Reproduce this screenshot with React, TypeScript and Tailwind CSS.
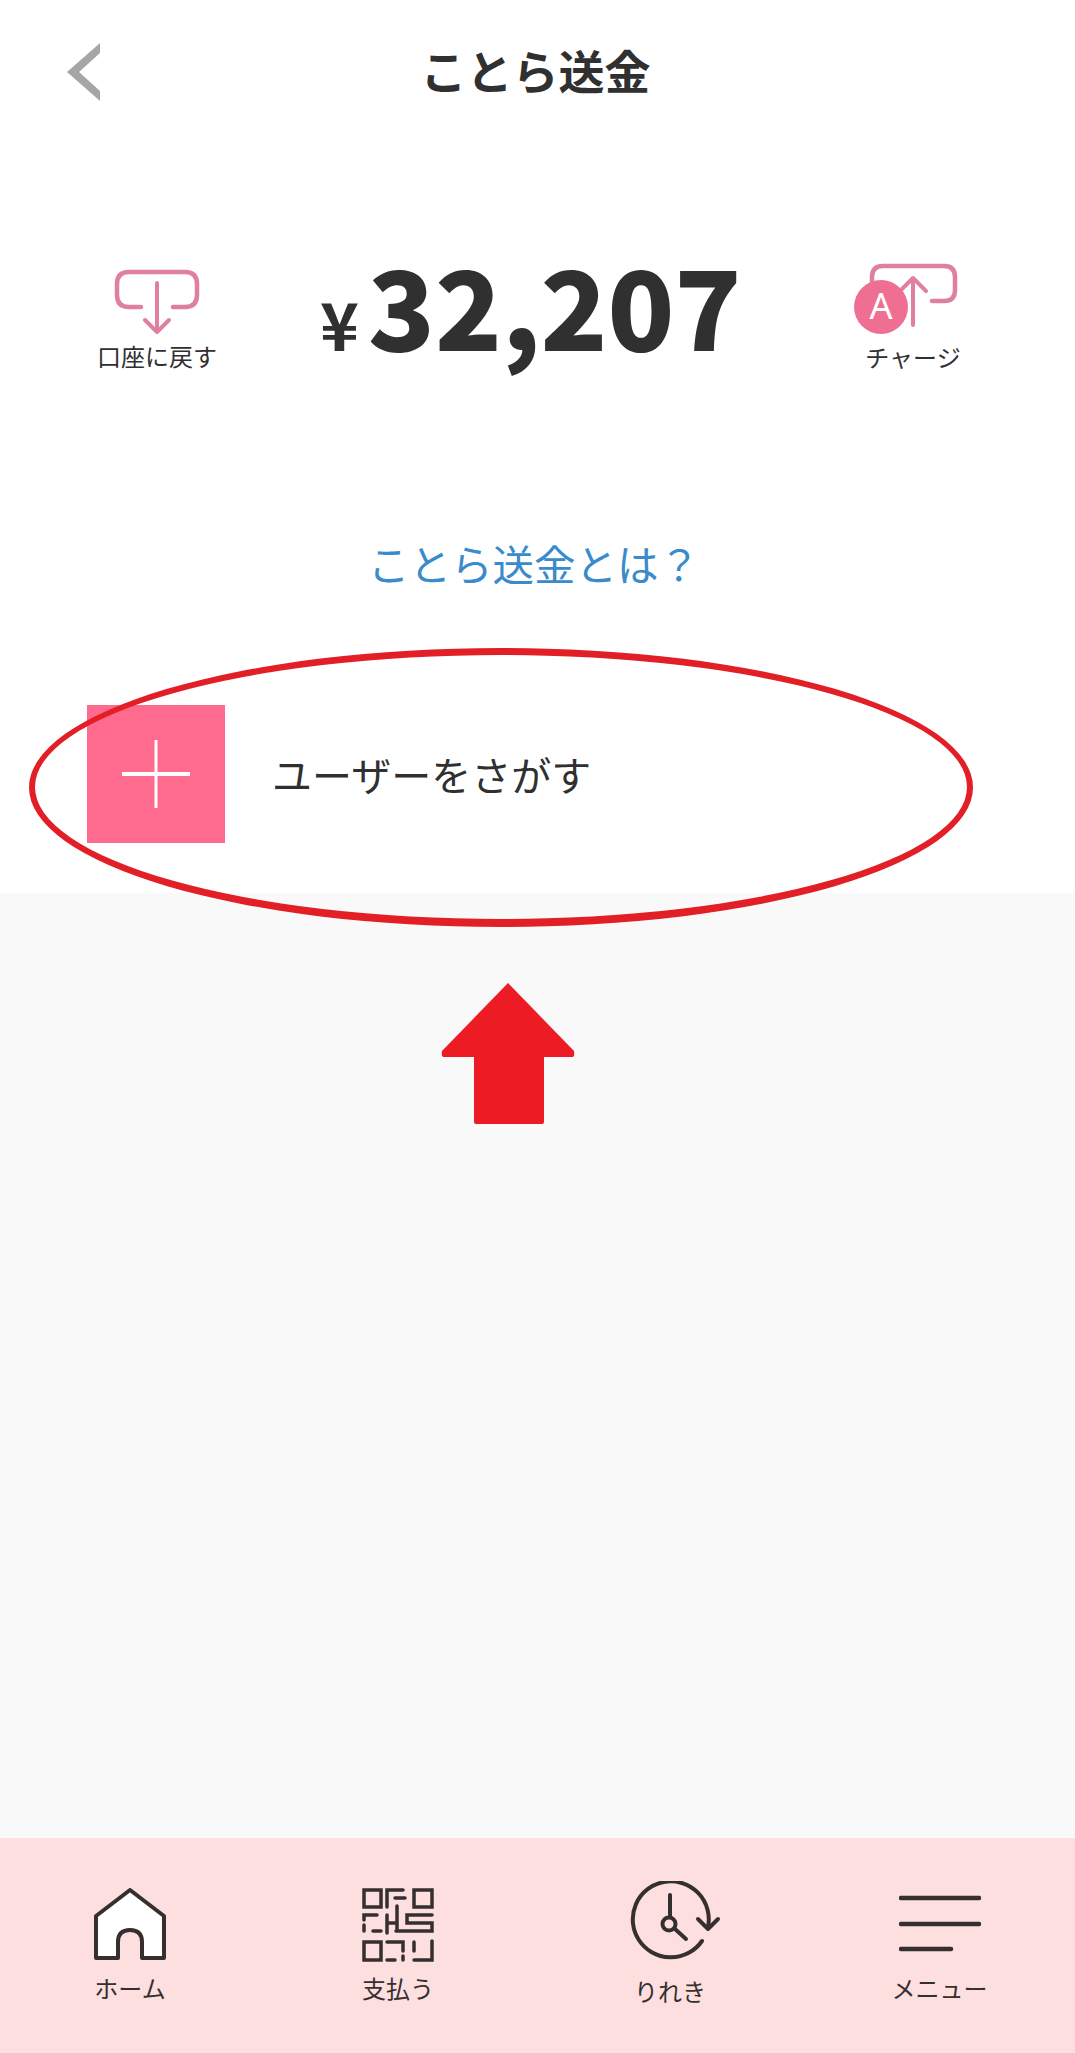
const jp = 'font-["Noto_Sans_CJK_JP",sans-serif]';

function BackIcon() {
  return (
    <svg width="33" height="58" viewBox="0 0 33 58">
      <path d="M33 0 V10 L12 29 L33 48 V58 L0 29 Z" fill="#a6a6a6" />
    </svg>
  );
}

function WithdrawIcon() {
  return (
    <svg width="86" height="66" viewBox="0 0 86 66" fill="none" stroke="#e0809f" strokeLinecap="round" strokeLinejoin="round">
      <path d="M27 38 H15 Q3 38 3 26 V15 Q3 3 15 3 H71 Q83 3 83 15 V26 Q83 38 71 38 H59" strokeWidth="4.5" />
      <path d="M43 14 V63 M31 51 L43 63 L55 51" strokeWidth="4" />
    </svg>
  );
}

function ChargeIcon() {
  return (
    <svg width="106" height="74" viewBox="0 0 106 74" fill="none" stroke="#e0809f" strokeLinecap="round" strokeLinejoin="round">
      <path d="M19 22 V15 Q19 4 30 4 H91 Q102 4 102 15 V28 Q102 39 91 39 H79" strokeWidth="4.5" />
      <path d="M60 63 V16 M47 29 L60 16 L73 29" strokeWidth="4" />
      <circle cx="28" cy="45" r="27" fill="#ef6f93" stroke="none" />
      <text x="28" y="57" textAnchor="middle" fill="#ffffff" stroke="none" fontSize="36" fontFamily="Noto Sans">A</text>
    </svg>
  );
}

function HomeIcon() {
  return (
    <svg width="72" height="72" viewBox="0 0 72 72" fill="#ffffff" stroke="#362f2f" strokeWidth="4" strokeLinejoin="round">
      <path d="M36 2 L70 28 V70 H48 V54 Q48 42 36 42 Q24 42 24 54 V70 H2 V28 Z" />
    </svg>
  );
}

function QrIcon() {
  return (
    <svg width="90" height="90" viewBox="0 0 90 90" fill="none" stroke="#362f2f" strokeWidth="3.5" strokeLinecap="round">
      <rect x="11" y="9" width="17" height="17" />
      <rect x="61" y="9" width="18" height="17" />
      <rect x="11" y="61" width="17" height="18" />
      <path d="M34 26 V9 H50 M42 17 H52 M44 25 V48" />
      <path d="M11 39 V34 H24 M11 44 V50 M20 50 H28 M34 34 V52 M34 42 H42" />
      <path d="M79 34 H54 V42 H79 V50 H43" />
      <path d="M34 61 H50 V70 M34 79 H42 M50 75 V79 M61 61 V70 M79 60 V79 H61" />
    </svg>
  );
}

function HistoryIcon() {
  return (
    <svg width="100" height="90" viewBox="0 0 100 90" fill="none" stroke="#362f2f" strokeWidth="4" strokeLinecap="round" strokeLinejoin="round">
      <path d="M83 46 A38 38 0 1 0 77 60" />
      <path d="M73 38 L83 48 L93 38" />
      <path d="M45 14 V36 M50 48 L61 58" />
      <circle cx="44" cy="43" r="6.5" />
    </svg>
  );
}

function MenuIcon() {
  return (
    <svg width="82" height="58" viewBox="0 0 82 58" fill="none" stroke="#362f2f" strokeWidth="4.5" strokeLinecap="round">
      <path d="M2 3 H80 M2 29 H80 M2 54 H52" />
    </svg>
  );
}

const navItems = [
  { label: 'ホーム', icon: <HomeIcon />, width: 'w-[260px]', pad: 'pt-[50px]', gap: 'mt-[12px]' },
  { label: '支払う', icon: <QrIcon />, width: 'w-[276px]', pad: 'pt-[43px]', gap: 'mt-[1px]' },
  { label: 'りれき', icon: <div className="ml-[10px]"><HistoryIcon /></div>, width: 'w-[268px]', pad: 'pt-[43px]', gap: 'mt-[4px]' },
  { label: 'メニュー', icon: <MenuIcon />, width: 'w-[271px]', pad: 'pt-[57px]', gap: 'mt-[19px]' },
];

export default function App() {
  return (
    <div className={`relative flex h-[2053px] w-full flex-col overflow-hidden bg-white text-[#303030] ${jp}`}>
      {/* header */}
      <div className="grid h-[144px] shrink-0 grid-cols-[1fr_auto_1fr] items-center">
        <div className="-mt-[1px] ml-[67px]">
          <BackIcon />
        </div>
        <h1 className="-mt-[6px] -translate-x-[2px] text-[46px] leading-none font-bold">ことら送金</h1>
      </div>

      {/* balance */}
      <div className="flex h-[230px] shrink-0 items-start">
        <div className="mt-[125px] ml-[39px] flex w-[236px] flex-col items-center">
          <WithdrawIcon />
          <span className="mt-[5px] text-[24px] leading-[32px]">口座に戻す</span>
        </div>
        <div className="mt-[84px] ml-[45px] flex items-baseline font-black">
          <span className="text-[66px] leading-none font-bold">¥</span>
          <span className="ml-[9px] text-[110px] leading-[150px]">32,207</span>
        </div>
      </div>

      {/* link */}
      <div className="flex h-[330px] shrink-0 flex-col">
        <a className="mt-[159px] ml-[368px] text-[41.5px] leading-[60px] text-[#3a8bcb]">ことら送金とは？</a>
      </div>

      {/* search row */}
      <div className="flex h-[189px] shrink-0 items-start pl-[87px]">
        <div className="mt-[1px] flex h-[138px] w-[138px] items-center justify-center bg-[#ff6a8f]">
          <svg width="68" height="68" viewBox="0 0 68 68" stroke="#ffffff">
            <path d="M34 0 V68" strokeWidth="3" />
            <path d="M0 34 H68" strokeWidth="4" />
          </svg>
        </div>
        <span className="mt-[40px] ml-[47px] text-[40px] leading-[60px]">ユーザーをさがす</span>
      </div>

      <div className="flex-1 bg-[#f9f9f9]" />

      {/* bottom nav */}
      <nav className="flex h-[215px] shrink-0 bg-[#fddfe0]">
        {navItems.map((item) => (
          <div key={item.label} className={`flex flex-col items-center ${item.width} ${item.pad}`}>
            {item.icon}
            <span className={`text-[24px] leading-[32px] text-[#362f2f] ${item.gap}`}>{item.label}</span>
          </div>
        ))}
      </nav>

      {/* charge sits over the balance row's right edge */}
      <div className="absolute top-[262px] left-[853px] flex w-[106px] flex-col items-center">
        <ChargeIcon />
        <span className="mt-[5px] ml-[14px] text-[24px] leading-[32px] whitespace-nowrap">チャージ</span>
      </div>

      {/* red annotation */}
      <svg className="pointer-events-none absolute top-[644px] left-[25px]" width="952" height="288" viewBox="0 0 952 288">
        <path
          fillRule="evenodd"
          fill="#e21f26"
          d="M4 143.5 A472 139.5 0 1 1 948 143.5 A472 139.5 0 1 1 4 143.5 Z M10 143 A466 132 0 1 0 942 143 A466 132 0 1 0 10 143 Z"
        />
      </svg>
      <svg className="pointer-events-none absolute top-[983px] left-[441px]" width="134" height="141" viewBox="0 0 134 141">
        <path d="M67 0 L133 68 Q134 74 131 74 H103 V139 Q103 141 101 141 H35 Q33 141 33 139 V74 H3 Q0 74 1 68 Z" fill="#ed1c24" />
      </svg>
    </div>
  );
}
